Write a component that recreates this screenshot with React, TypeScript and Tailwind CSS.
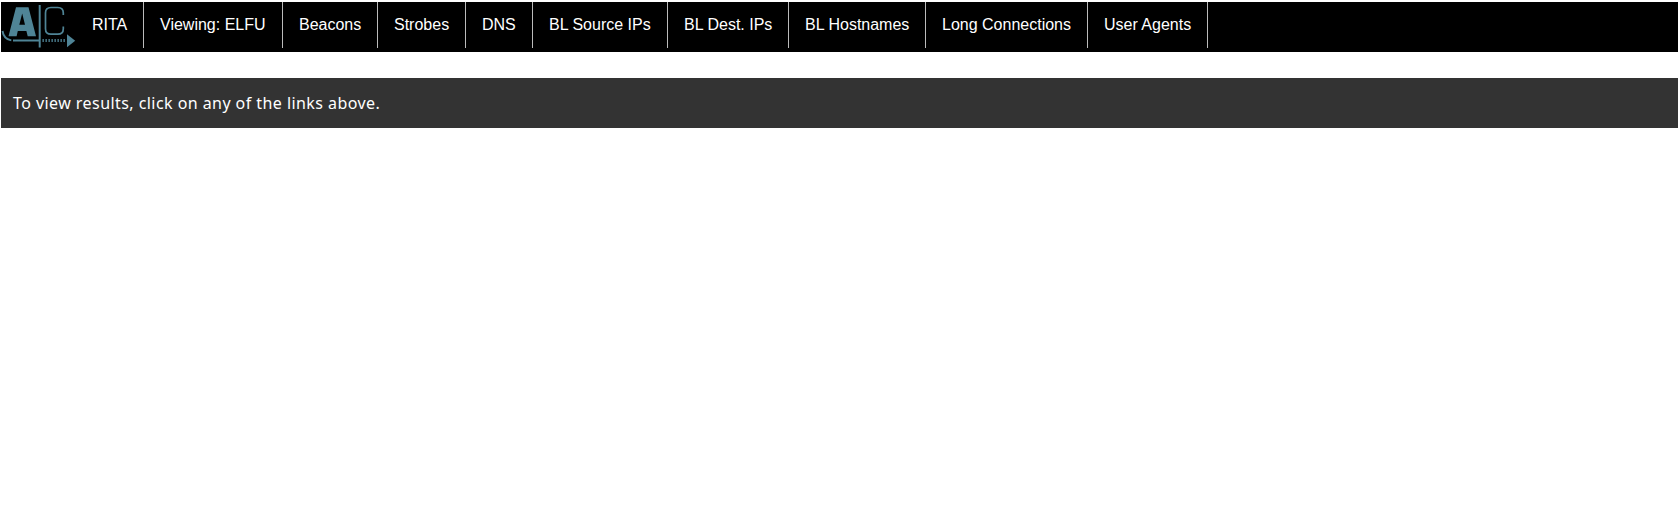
const items = [
  { label: "RITA", width: "w-[68px]" },
  { label: "Viewing: ELFU", width: "w-[139px]" },
  { label: "Beacons", width: "w-[95px]" },
  { label: "Strobes", width: "w-[88px]" },
  { label: "DNS", width: "w-[67px]" },
  { label: "BL Source IPs", width: "w-[135px]" },
  { label: "BL Dest. IPs", width: "w-[121px]" },
  { label: "BL Hostnames", width: "w-[137px]" },
  { label: "Long Connections", width: "w-[162px]" },
  { label: "User Agents", width: "w-[120px]" },
];

function Logo() {
  return (
    <svg width="75" height="46" viewBox="1 2 75 46" className="block shrink-0" fill="none" stroke="#4f8496" aria-hidden="true">
      <path fill="#4f8496" stroke="none" fillRule="evenodd" d="M8.5 36.2L16 7.3H28.5L36 36.2H27.7L26.4 31H17.8L16.6 36.2ZM19.3 24.8H25L22.2 13.5Z" />
      <path strokeWidth="2" d="M39.7 5V47.5" />
      <path strokeWidth="1.7" d="M63.3 15V13Q63.3 7.5 57.8 7.5H51Q45.5 7.5 45.5 13V28.7Q45.5 34.2 51 34.2H57.8Q63.3 34.2 63.3 28.7V26.5" />
      <path strokeWidth="1.9" d="M2.5 31C3.2 36 6.5 39.5 11.3 40.4M13 40.5H39" />
      <path strokeWidth="3" strokeDasharray="1.3 1.7" d="M42.5 40.5H66" />
      <path fill="#4f8496" stroke="none" d="M67 34.3L75.2 40.7L67 47.2Z" />
    </svg>
  );
}

export default function App() {
  return (
    <div className="min-h-screen bg-white pt-[2px] pl-px text-white">
      <nav className="flex h-[50px] items-start bg-black font-['Liberation_Sans',Arial,sans-serif] text-base">
        <Logo />
        <ul className="flex">
          {items.map((item) => (
            <li key={item.label} className={`${item.width} h-[46px] border-r border-[#bbbbbb]`}>
              <a className="block pt-[11px] pl-4 leading-6 whitespace-nowrap">{item.label}</a>
            </li>
          ))}
        </ul>
      </nav>
      <main className="mt-[26px] flex h-[50px] items-center bg-[#333333] pl-3 font-['Noto_Sans',sans-serif] text-base">
        <p className="whitespace-nowrap tracking-[0.44px]">To view results, click on any of the links above.</p>
      </main>
    </div>
  );
}
